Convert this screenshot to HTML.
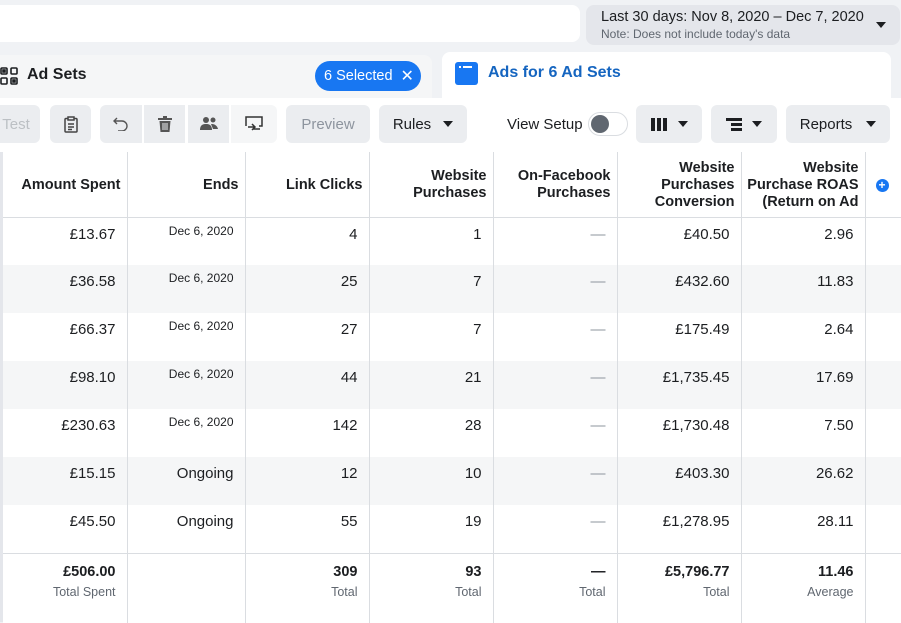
<!DOCTYPE html>
<html><head><meta charset="utf-8"><style>
*{box-sizing:border-box;margin:0;padding:0}
body{width:901px;height:622px;overflow:hidden;background:#f0f2f5;font-family:"Liberation Sans",Arial,sans-serif;color:#1c1e21;position:relative}
.abs{position:absolute}
.btn{position:absolute;top:105px;height:38px;background:#ebedf0;border-radius:6px;font-size:15px;display:flex;align-items:center;justify-content:center;color:#1c1e21}
.tri{display:inline-block;width:0;height:0;border-left:5px solid transparent;border-right:5px solid transparent;border-top:6px solid #1c1e21;margin-left:12px}
table{position:absolute;left:3px;top:152px;border-collapse:collapse;background:#fff;font-size:15px}
td{height:48px;text-align:right;vertical-align:top;padding:8px 11px 0 0;border-right:1px solid #dadde1}
tr.h td{height:65px;vertical-align:middle;font-weight:bold;font-size:14.5px;line-height:17px;padding:2px 6px 0 0;border-bottom:1px solid #dadde1}
tr.g td{background:#f5f6f7}
td.d{font-size:12px;padding-top:6px}
td.dash{color:#8d949e}
tr.t td{height:70px;border-top:1px solid #dadde1;padding-top:10px;font-weight:bold;font-size:14.5px}
tr.t td span{display:block;font-weight:normal;font-size:12.5px;color:#606770;margin-top:5px}
</style></head><body>
<div class="abs" style="left:0;top:5px;width:580px;height:37px;background:#fff;border-radius:0 8px 8px 0"></div>
<div class="abs" style="left:586px;top:5px;width:314px;height:40px;background:#e4e6eb;border-radius:8px"></div>
<div class="abs" style="left:601px;top:9px;font-size:14.5px">Last 30 days: Nov 8, 2020 – Dec 7, 2020</div>
<div class="abs" style="left:601px;top:27px;font-size:12px;color:#606770">Note: Does not include today's data</div>
<div class="abs" style="left:876px;top:22px;width:0;height:0;border-left:5px solid transparent;border-right:5px solid transparent;border-top:6px solid #1c1e21"></div>

<div class="abs" style="left:0;top:55px;width:432px;height:43px;background:#f5f6f7;border-radius:0 8px 0 0"></div>
<svg class="abs" style="left:0;top:67px" width="18" height="18" viewBox="0 0 18 18" fill="none" stroke="#1c1e21" stroke-width="1.6"><rect x="1" y="1" width="6" height="6" rx="1"/><rect x="11" y="1" width="6" height="6" rx="1"/><rect x="1" y="11" width="6" height="6" rx="1"/><rect x="11" y="11" width="6" height="6" rx="1"/><rect x="13" y="13" width="2" height="2" fill="#1c1e21"/><rect x="3" y="3" width="2" height="2" fill="#1c1e21"/></svg>
<div class="abs" style="left:27px;top:66px;font-size:16px;font-weight:bold">Ad Sets</div>
<div class="abs" style="left:315px;top:61px;width:106px;height:30px;background:#1877f2;border-radius:15px;color:#fff;font-size:14.5px;display:flex;align-items:center;padding-left:9px">6 Selected <span style="margin-left:8px;font-size:16px">✕</span></div>

<div class="abs" style="left:442px;top:52px;width:449px;height:55px;background:#fff;border-radius:8px 8px 0 0"></div>
<div class="abs" style="left:455px;top:62px;width:23px;height:23px;background:#1877f2;border-radius:3px"><div style="position:absolute;left:4px;top:4px;width:2px;height:2px;background:#fff"></div><div style="position:absolute;left:8px;top:4px;width:9px;height:2px;background:#fff"></div></div>
<div class="abs" style="left:488px;top:64px;font-size:16px;font-weight:bold;color:#1565c0">Ads for 6 Ad Sets</div>

<div class="abs" style="left:0;top:98px;width:901px;height:54px;background:#fff"></div>
<div class="btn" style="left:-8px;width:48px;color:#bcc0c4">Test</div>
<div class="btn" style="left:50px;width:41px"><svg width="14" height="17" viewBox="0 0 14 17" fill="none" stroke="#444" stroke-width="1.5"><rect x="1" y="2.5" width="12" height="13.5" rx="1"/><rect x="4" y="1" width="6" height="3" fill="#ebedf0"/><path d="M4 8h6M4 11h6M4 13.5h4"/></svg></div>
<div class="btn" style="left:100px;width:42px;border-radius:6px 0 0 6px"><svg width="16" height="14" viewBox="0 0 16 14" fill="none" stroke="#555" stroke-width="1.4"><path d="M4 1L1 4l3 3M1 4h8a5 5 0 010 10H5"/></svg></div>
<div class="btn" style="left:144px;width:41px;border-radius:0"><svg width="14" height="16" viewBox="0 0 14 16" fill="#555"><rect x="0" y="2" width="14" height="2"/><rect x="5" y="0" width="4" height="2"/><path d="M1.5 5h11l-1 11h-9z"/><path d="M5 7v7M7 7v7M9 7v7" stroke="#ebedf0" stroke-width="1"/></svg></div>
<div class="btn" style="left:188px;width:41px;border-radius:0"><svg width="18" height="16" viewBox="0 0 18 16" fill="#555"><circle cx="6" cy="4" r="3"/><circle cx="13" cy="4" r="2.5"/><path d="M0 14c0-5 3-6 6-6s6 1 6 6zM11 8c3 0 6 1 7 5h-5z"/></svg></div>
<div class="btn" style="left:231px;width:46px;background:#f5f6f7;border-radius:0 6px 6px 0"><svg width="18" height="16" viewBox="0 0 18 16" fill="none" stroke="#333" stroke-width="1.5"><path d="M1 10V1h16v9h-3M3 11h7M7 8l3 3-3 3M15 13H8"/></svg></div>
<div class="btn" style="left:286px;width:84px;color:#8d949e">Preview</div>
<div class="btn" style="left:379px;width:88px">Rules<span class="tri"></span></div>
<div class="abs" style="left:507px;top:116px;font-size:15px">View Setup</div>
<div class="abs" style="left:588px;top:112px;width:40px;height:24px;border:1px solid #dadde1;border-radius:12px;background:#fff"><div style="position:absolute;left:2px;top:2px;width:18px;height:18px;border-radius:50%;background:#606770"></div></div>
<div class="btn" style="left:636px;width:66px"><svg width="17" height="13"><rect x="0" y="0" width="4" height="13" fill="#1c1e21"/><rect x="6" y="0" width="4" height="13" fill="#1c1e21"/><rect x="12" y="0" width="4" height="13" fill="#1c1e21"/></svg><span class="tri" style="margin-left:10px"></span></div>
<div class="btn" style="left:711px;width:66px"><svg width="16" height="13"><rect x="0" y="0" width="16" height="3" fill="#1c1e21"/><rect x="5" y="5" width="11" height="3" fill="#1c1e21"/><rect x="5" y="10" width="11" height="3" fill="#1c1e21"/></svg><span class="tri" style="margin-left:10px"></span></div>
<div class="btn" style="left:786px;width:104px">Reports<span class="tri" style="margin-left:14px"></span></div>

<div class="abs" style="left:0;top:152px;width:901px;height:470px;background:#fff"></div>
<div class="abs" style="left:0;top:152px;width:3px;height:470px;background:#e4e6eb"></div>
<table>
<colgroup><col style="width:124px"><col style="width:118px"><col style="width:124px"><col style="width:124px"><col style="width:124px"><col style="width:124px"><col style="width:124px"><col style="width:36px"></colgroup>
<tr class="h"><td>Amount Spent</td><td>Ends</td><td>Link Clicks</td><td>Website<br>Purchases</td><td>On-Facebook<br>Purchases</td><td>Website<br>Purchases<br>Conversion</td><td>Website<br>Purchase ROAS<br>(Return on Ad</td><td style="text-align:left;padding-left:10px;border-right:none"><span style="display:inline-block;width:13px;height:13px;border-radius:50%;background:#1877f2;color:#fff;font-size:12px;line-height:13px;text-align:center">+</span></td></tr>
<tr><td>£13.67</td><td class="d">Dec 6, 2020</td><td>4</td><td>1</td><td class="dash">—</td><td>£40.50</td><td>2.96</td><td style="border:none"></td></tr>
<tr class="g"><td>£36.58</td><td class="d">Dec 6, 2020</td><td>25</td><td>7</td><td class="dash">—</td><td>£432.60</td><td>11.83</td><td style="border:none"></td></tr>
<tr><td>£66.37</td><td class="d">Dec 6, 2020</td><td>27</td><td>7</td><td class="dash">—</td><td>£175.49</td><td>2.64</td><td style="border:none"></td></tr>
<tr class="g"><td>£98.10</td><td class="d">Dec 6, 2020</td><td>44</td><td>21</td><td class="dash">—</td><td>£1,735.45</td><td>17.69</td><td style="border:none"></td></tr>
<tr><td>£230.63</td><td class="d">Dec 6, 2020</td><td>142</td><td>28</td><td class="dash">—</td><td>£1,730.48</td><td>7.50</td><td style="border:none"></td></tr>
<tr class="g"><td>£15.15</td><td>Ongoing</td><td>12</td><td>10</td><td class="dash">—</td><td>£403.30</td><td>26.62</td><td style="border:none"></td></tr>
<tr><td>£45.50</td><td>Ongoing</td><td>55</td><td>19</td><td class="dash">—</td><td>£1,278.95</td><td>28.11</td><td style="border:none"></td></tr>
<tr class="t"><td>£506.00<span>Total Spent</span></td><td></td><td>309<span>Total</span></td><td>93<span>Total</span></td><td>—<span>Total</span></td><td>£5,796.77<span>Total</span></td><td>11.46<span>Average</span></td><td style="border-right:none"></td></tr>
</table>
</body></html>
